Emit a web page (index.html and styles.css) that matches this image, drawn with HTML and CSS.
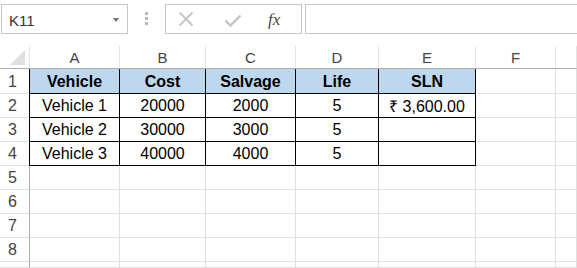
FILE: index.html
```html
<!DOCTYPE html>
<html lang="en">
<head>
    <meta charset="UTF-8">
    <meta name="viewport" content="width=device-width, initial-scale=1.0">
    <title>SLN</title>
    <link rel="stylesheet" href="styles.css">
</head>
<body>

<div class="formula-bar">
    <div class="name-box">
        <span>K11</span>
        <span class="arrow"></span>
    </div>
    <div class="grip">
        <span></span><span></span><span></span>
    </div>
    <div class="fx-box">
        <svg class="icon-x" width="16" height="16" viewBox="0 0 16 16">
            <path d="M1.5 1.5 L14.5 14.5 M14.5 1.5 L1.5 14.5" stroke="#c4c4c4" stroke-width="1.8" fill="none"/>
        </svg>
        <svg class="icon-ok" width="18" height="14" viewBox="0 0 18 14">
            <path d="M1.5 6.5 L6.5 11.5 L16.5 1.5" stroke="#c4c4c4" stroke-width="2.4" fill="none"/>
        </svg>
        <span class="fx">fx</span>
    </div>
    <div class="formula-input"></div>
</div>

<div class="sheet">
    <div class="row head">
        <div class="corner"><span class="tri"></span></div>
        <div>A</div><div>B</div><div>C</div><div>D</div><div>E</div><div>F</div><div></div>
    </div>
    <div class="row first">
        <div class="rh">1</div>
        <div class="t th left">Vehicle</div>
        <div class="t th">Cost</div>
        <div class="t th">Salvage</div>
        <div class="t th">Life</div>
        <div class="t th">SLN</div>
        <div></div><div></div>
    </div>
    <div class="row">
        <div class="rh">2</div>
        <div class="t left">Vehicle 1</div>
        <div class="t">20000</div>
        <div class="t">2000</div>
        <div class="t">5</div>
        <div class="t">₹ 3,600.00</div>
        <div></div><div></div>
    </div>
    <div class="row">
        <div class="rh">3</div>
        <div class="t left">Vehicle 2</div>
        <div class="t">30000</div>
        <div class="t">3000</div>
        <div class="t">5</div>
        <div class="t"></div>
        <div></div><div></div>
    </div>
    <div class="row">
        <div class="rh">4</div>
        <div class="t left">Vehicle 3</div>
        <div class="t">40000</div>
        <div class="t">4000</div>
        <div class="t">5</div>
        <div class="t"></div>
        <div></div><div></div>
    </div>
    <div class="row">
        <div class="rh">5</div>
        <div></div><div></div><div></div><div></div><div></div><div></div><div></div>
    </div>
    <div class="row">
        <div class="rh">6</div>
        <div></div><div></div><div></div><div></div><div></div><div></div><div></div>
    </div>
    <div class="row">
        <div class="rh">7</div>
        <div></div><div></div><div></div><div></div><div></div><div></div><div></div>
    </div>
    <div class="row">
        <div class="rh">8</div>
        <div></div><div></div><div></div><div></div><div></div><div></div><div></div>
    </div>
    <div class="row last">
        <div class="rh"></div>
        <div></div><div></div><div></div><div></div><div></div><div></div><div></div>
    </div>
</div>

</body>
</html>
```

FILE: styles.css
```css
body {
    margin: 0;
    background: #fff;
    font-family: "Liberation Sans", Arial, sans-serif;
    width: 577px;
    height: 268px;
    overflow: hidden;
}

/* formula bar */

.formula-bar {
    display: flex;
    align-items: flex-start;
    height: 46px;
    padding-top: 4px;
    box-sizing: border-box;
}

.name-box {
    display: flex;
    align-items: center;
    width: 127px;
    height: 30px;
    margin-left: 1px;
    border: 1px solid #c6c6c6;
    box-sizing: border-box;
    font-size: 15px;
    color: #333;
    padding: 2px 0 0 7px;
}

.name-box .arrow {
    margin-left: auto;
    margin-right: 8px;
    border-left: 3.5px solid transparent;
    border-right: 3.5px solid transparent;
    border-top: 4px solid #707070;
}

.grip {
    display: flex;
    flex-direction: column;
    gap: 2px;
    margin: 8px 0 0 17px;
}

.grip span {
    width: 3px;
    height: 3px;
    background: #b8b8b8;
}

.fx-box {
    display: flex;
    align-items: center;
    width: 137px;
    height: 30px;
    margin-left: 17px;
    border: 1px solid #c6c6c6;
    box-sizing: border-box;
}

.icon-x {
    margin-left: 12px;
}

.icon-ok {
    margin-left: 30px;
    margin-top: 3px;
}

.fx {
    margin-left: 26px;
    margin-top: 2px;
    font-family: "Liberation Serif", "Times New Roman", serif;
    font-style: italic;
    font-size: 17px;
    color: #4a4a4a;
}

.formula-input {
    flex: 1;
    height: 30px;
    margin-left: 3px;
    border: 1px solid #c6c6c6;
    border-right: none;
    box-sizing: border-box;
}

/* grid */

.sheet {
    height: 222px;
    overflow: hidden;
}

.row {
    display: grid;
    grid-template-columns: 30px 90px 86px 90px 83px 97px 80px 1fr;
    height: 24px;
}

.row > div {
    display: flex;
    align-items: center;
    justify-content: center;
    border-right: 1px solid #e0e0e0;
    border-bottom: 1px solid #e0e0e0;
    box-sizing: border-box;
    font-size: 16px;
    color: #000;
    padding-top: 1px;
}

.row.first {
    height: 25px;
}

.row.head {
    height: 23px;
}

.row.last {
    height: 6px;
}

.row.head > div {
    border-right-color: #e4e4e4;
    border-bottom-color: #ababab;
    font-size: 15px;
    color: #444;
    padding-top: 0;
}

.row > .rh {
    border-right-color: #ababab;
    color: #444;
    justify-content: flex-start;
    padding-left: 8px;
}

.corner {
    position: relative;
}

.corner .tri {
    position: absolute;
    right: 4px;
    bottom: 3px;
    width: 0;
    height: 0;
    border-left: 15px solid transparent;
    border-bottom: 15px solid #dfdfdf;
}

.row > .t {
    border-right-color: #000;
    border-bottom-color: #000;
}

.row > .t.left {
    box-shadow: -1px 0 0 #000;
}

.row > .th {
    background: #bdd7ee;
    font-weight: bold;
}
```
